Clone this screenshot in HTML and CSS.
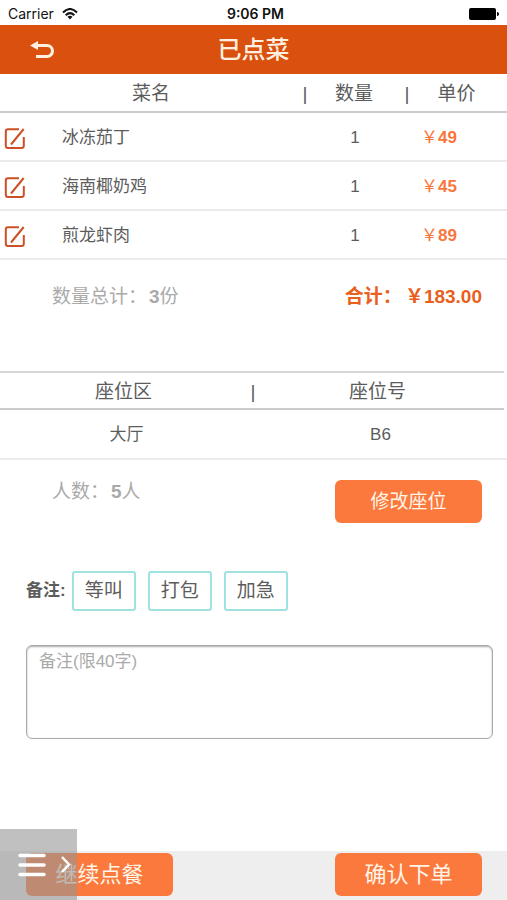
FILE: index.html
```html
<!DOCTYPE html>
<html lang="zh-CN">
<head>
<meta charset="utf-8">
<meta name="viewport" content="width=device-width, initial-scale=1">
<title>已点菜</title>
<link rel="stylesheet" href="styles.css">
</head>
<body>
<svg class="defs" aria-hidden="true">
  <symbol id="edit" viewBox="0 0 22 24">
    <path d="M15 2.200H4Q1.800 2.200 1.800 4.500V18.500Q1.800 21 4 21H17.500Q19.800 21 19.800 18.500V10" fill="none" stroke="currentColor" stroke-width="2"/>
    <path d="M7 17.500L19.700 2" fill="none" stroke="currentColor" stroke-width="2"/>
  </symbol>
</svg>
<div class="status">
  <div class="carrier">Carrier
    <svg width="16" height="12" viewBox="0 0 16 12" fill="none" stroke="#111" stroke-width="2" aria-hidden="true">
      <path d="M1 4.500Q8 -2.500 15 4.500M3.700 7.200Q8 3 12.300 7.200"/>
      <path d="M5.500 8.800Q8 6.700 10.500 8.800L8 11.500Z" fill="#111" stroke="none"/>
    </svg>
  </div>
  <div class="clock">9:06 PM</div>
  <svg class="battery" width="30" height="12" viewBox="0 0 30 12" aria-hidden="true">
    <rect width="27" height="12" rx="2"/><path d="M28 4Q30 4 30 6T28 8Z"/>
  </svg>
</div>
<header class="bar">
  <button class="back" type="button" aria-label="返回">
    <svg width="26" height="18" viewBox="0 0 26 18" aria-hidden="true">
      <path d="M6 4.500H17A5.500 5.500 0 0 1 17 15.500H6" fill="none" stroke="currentColor" stroke-width="3"/>
      <path d="M0 4.500L8 0V9Z" fill="currentColor"/>
    </svg>
  </button>
  <h1>已点菜</h1>
</header>
<main>
  <table class="dishes">
    <colgroup><col class="c-icon"><col><col class="c-sep"><col class="c-qty"><col class="c-sep"><col class="c-price"></colgroup>
    <thead>
      <tr><th colspan="2">菜名</th><th>|</th><th>数量</th><th>|</th><th>单价</th></tr>
    </thead>
    <tbody>
      <tr><td><button class="edit" type="button" aria-label="编辑"><svg width="22" height="24" aria-hidden="true"><use href="#edit"/></svg></button></td><td class="name" colspan="2">冰冻茄丁</td><td>1</td><td class="price" colspan="2">￥<b>49</b></td></tr>
      <tr><td><button class="edit" type="button" aria-label="编辑"><svg width="22" height="24" aria-hidden="true"><use href="#edit"/></svg></button></td><td class="name" colspan="2">海南椰奶鸡</td><td>1</td><td class="price" colspan="2">￥<b>45</b></td></tr>
      <tr><td><button class="edit" type="button" aria-label="编辑"><svg width="22" height="24" aria-hidden="true"><use href="#edit"/></svg></button></td><td class="name" colspan="2">煎龙虾肉</td><td>1</td><td class="price" colspan="2">￥<b>89</b></td></tr>
    </tbody>
  </table>
  <section class="summary totals">
    <p>数量总计：<b>3</b>份</p>
    <p class="sum"><span>合计：</span><span>￥183.00</span></p>
  </section>
  <table class="seats">
    <colgroup><col class="c-area"><col class="c-sep"><col></colgroup>
    <thead><tr><th>座位区</th><th>|</th><th>座位号</th></tr></thead>
    <tbody><tr><td>大厅</td><td></td><td>B6</td></tr></tbody>
  </table>
  <section class="summary people">
    <p>人数：<b>5</b>人</p>
    <button class="primary" type="button">修改座位</button>
  </section>
  <section class="tags">
    <span class="label">备注:</span>
    <div class="options">
      <button type="button">等叫</button>
      <button type="button">打包</button>
      <button type="button">加急</button>
    </div>
  </section>
  <textarea class="note" aria-label="备注" maxlength="40" placeholder="备注(限40字)"></textarea>
</main>
<footer>
  <button class="primary large" type="button">继续点餐</button>
  <button class="primary large" type="button">确认下单</button>
</footer>
<button class="drawer" type="button" aria-label="菜单">
  <svg width="77" height="71" viewBox="0 0 77 71" fill="none" stroke="#fff" aria-hidden="true">
    <path d="M20 26.500H44M20 36H44M20 45.500H44" stroke-width="3.500" stroke-linecap="round"/>
    <path d="M62 28L69 35.500L62 43" stroke-width="2.500"/>
  </svg>
</button>
</body>
</html>
```

FILE: styles.css
```css
* { box-sizing: border-box; }

body {
  margin: 0;
  min-height: 100vh;
  display: flex;
  flex-direction: column;
  background: #fff;
  color: #5c5c5c;
  font: 17px/24px "Liberation Sans", "Noto Sans CJK SC", sans-serif;
}

button {
  margin: 0;
  padding: 0;
  border: 0;
  background: none;
  color: inherit;
  font: inherit;
}

svg { display: block; }
p, h1 { margin: 0; }

.defs {
  position: absolute;
  width: 0;
  height: 0;
}

.status {
  display: grid;
  grid-template-columns: 1fr auto 1fr;
  align-items: center;
  height: 25px;
  padding: 2px 8px 0;
  color: #111;
  font: 14px/20px Inter, "Liberation Sans", sans-serif;
}

.carrier {
  display: flex;
  align-items: center;
  gap: 8px;
}

.clock {
  padding-left: 4px;
  font-weight: 600;
}

.battery { justify-self: end; }

.bar {
  display: grid;
  grid-template-columns: 60px 1fr 60px;
  align-items: center;
  height: 49px;
  background: #d9500f;
  color: #fff0e0;
}

.back { padding-left: 30px; }

.bar h1 {
  font-size: 24px;
  line-height: 32px;
  font-weight: 500;
  text-align: center;
}

table {
  width: 100%;
  table-layout: fixed;
  border-collapse: separate;
  border-spacing: 0;
}

.c-icon { width: 62px; }
.c-sep { width: 12px; }
.c-qty { width: 90px; }
.c-price { width: 95px; }
.c-area { width: 49%; }

th {
  height: 39px;
  padding: 2px 0 0;
  border-bottom: 2px solid #ccc;
  font-size: 19px;
  font-weight: 400;
  text-align: center;
}

td {
  height: 49px;
  padding: 2px 0 0;
  text-align: center;
}

.dishes th:first-child { padding-left: 4px; }
.dishes th:nth-child(2) { padding-left: 2px; }
.dishes th:nth-child(3) { padding-right: 2px; }
.dishes th:nth-child(4) { padding-left: 2px; }
.dishes th:last-child { padding-right: 6px; }

.dishes td { border-bottom: 2px solid #ebebeb; }
.dishes .name { text-align: left; }

.dishes .price {
  padding-left: 21px;
  color: #f8763c;
  text-align: left;
}

.edit {
  display: block;
  padding: 2px 0 0 4px;
  color: #cc5026;
}

.summary {
  display: flex;
  align-items: flex-start;
  justify-content: space-between;
  padding: 0 25px 0 52px;
  color: #aaa;
  font-size: 19px;
}

.summary b { padding-left: 2px; }

.totals {
  height: 111px;
  padding-top: 25px;
}

.sum {
  display: flex;
  gap: 3px;
  color: #e8601c;
  font-weight: 700;
}

.seats { width: calc(100% - 3px); }
.seats th { border-top: 2px solid #d8d8d8; }
.seats th:last-child { padding-right: 8px; }
.seats td { height: 48px; }
.seats td:first-child { padding-left: 6px; }
.seats td:last-child { padding-right: 2px; }

.people {
  padding-top: 20px;
  border-top: 2px solid #ebebeb;
}

.primary {
  width: 147px;
  height: 43px;
  border-radius: 6px;
  background: #fb793c;
  color: #fff4e8;
  font-size: 19px;
}

.large { font-size: 22px; }

.tags {
  display: flex;
  align-items: center;
  gap: 6px;
  padding: 48px 26px 34px;
}

.label {
  font-weight: 700;
}

.options {
  display: flex;
  gap: 12px;
}

.options button {
  width: 64px;
  height: 40px;
  border: 2px solid #a0e2e2;
  border-radius: 3px;
  font-size: 19px;
}

main { flex: 1; }

.note {
  display: block;
  width: calc(100% - 40px);
  height: 94px;
  margin: 0 14px 0 26px;
  padding: 4px 12px;
  border: 1px solid #aaa;
  border-radius: 6px;
  background: #fff;
  box-shadow: inset 0 1px 2px #aaa;
  color: #555;
  font: inherit;
  resize: none;
}

.note::placeholder { color: #aaa; }

footer {
  display: flex;
  justify-content: space-between;
  height: 49px;
  padding: 2px 25px 4px 26px;
  background: #eee;
}

.drawer {
  position: fixed;
  left: 0;
  bottom: 0;
  background: rgba(150, 150, 150, 0.6);
}
```
